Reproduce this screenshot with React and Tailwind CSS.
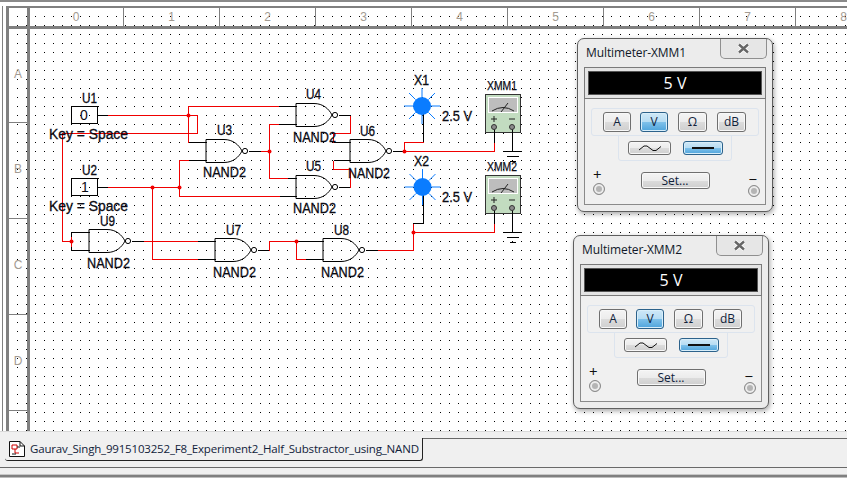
import React from "react";

const redPaths = [
  "M107 115H197V133H62V241H71",
  "M188 115V106H278",
  "M188 115V142",
  "M269 151H260M269 151V124H278M269 151V178H287",
  "M188 160H179V196H279",
  "M107 187H179",
  "M152 187V259H197",
  "M143 241H197",
  "M269 250V241H296M296 241V259H305",
  "M377 250H413V223",
  "M413 232H494V223",
  "M350 115V133H333V142",
  "M350 187V169H333V160",
  "M404 151H494V142",
  "M404 151V142H423",
  "M71 236V246",
];
const blackPaths = [
  "M98 115H107", "M98 187H107",
  "M188 142H206", "M188 160H206",
  "M248 151H260",
  "M278 106H296", "M278 124H296", "M287 178H296", "M279 196H296",
  "M338 115H350", "M338 187H350",
  "M333 142H350", "M333 160H350",
  "M392 151H404",
  "M423 142V106", "M413 223H423V187",
  "M71 236V232H89M71 246V250H89",
  "M131 241H143", "M197 241H215", "M197 259H215",
  "M257 250H269",
  "M296 241H323", "M305 259H323",
  "M365 250H377",
];
const junctions = [[188,115],[269,151],[179,187],[152,187],[71,241],[296,241],[404,151],[413,232]];
const gates = [[296,103],[206,139],[296,175],[350,139],[89,229],[215,238],[323,238]];
const labels = [
  ["U1",82,103,15],["U2",82,175,15],["U3",217,135,15],["U4",306,99,15],["U5",306,171,15],["U6",360,136,15],["U7",226,235,15],["U8",334,235,15],["U9",100,226,15],
  ["NAND2",203,177,43],["NAND2",293,142,43],["NAND2",293,213,43],["NAND2",348,178,42],["NAND2",87,268,43],["NAND2",213,277,43],["NAND2",321,277,43],
  ["Key = Space",49,139,79],["Key = Space",49,211,79],
  ["X1",414,85,15],["X2",414,166,15],["2.5 V",442,121,30],["2.5 V",442,202,30],
];

function Gate({ x, y }) {
  return (
    <g transform={`translate(${x} ${y})`} fill="none" stroke="#000">
      <path d="M0 0.5H18C27 0.5 33 6 36 12C33 18 27 23.5 18 23.5H0Z" />
      <circle cx="39" cy="12" r="2.6" fill="#fff" />
    </g>
  );
}

function Led({ cx, cy }) {
  const rays = [[0,-1],[0,1],[-1,0],[1,0],[-0.72,-0.72],[0.72,-0.72],[-0.72,0.72],[0.72,0.72]];
  return (
    <g>
      {rays.map(([a, b], i) => (
        <line key={i} x1={cx + a * 9} y1={cy + b * 9} x2={cx + a * 18} y2={cy + b * 18} stroke="#0a7cff" strokeWidth="1" />
      ))}
      <circle cx={cx} cy={cy} r="9" fill="#0a7cff" />
    </g>
  );
}

function Meter({ y, name }) {
  return (
    <g>
      <text x="487" y={y - 4} className="font-['Liberation_Sans'] text-[12px]" textLength="30" lengthAdjust="spacingAndGlyphs" fill="#0b0b14" stroke="#0b0b14" strokeWidth="0.25">{name}</text>
      <rect x="485.5" y={y + 0.5} width="35" height="38" fill="#c2dcc0" stroke="#333" />
      <rect x="488.5" y={y + 3.5} width="29" height="15" fill="#bdbdbd" stroke="#fff" />
      <path d={`M492 ${y + 17}Q503 ${y + 10} 514 ${y + 17}M501 ${y + 18}L508 ${y + 9}`} fill="none" stroke="#222" />
      <path d={`M491 ${y + 25}H497M494 ${y + 22}V${y + 28}M509 ${y + 25}H515`} stroke="#222" fill="none" />
      <path d={`M494.5 ${y + 35}V${y + 48}M512.5 ${y + 35}V${y + 57}`} stroke="#000" fill="none" />
      <circle cx="494" cy={y + 33} r="2.5" fill="#8c8c8c" stroke="#333" />
      <circle cx="512" cy={y + 33} r="2.5" fill="#8c8c8c" stroke="#333" />
      <path d={`M503 ${y + 57.5}H522M507 ${y + 62.5}H519M510 ${y + 67.5}H516`} stroke="#000" fill="none" />
    </g>
  );
}

function Schematic() {
  return (
    <svg width="838" height="423" viewBox="9 8 838 423" className="absolute left-0 top-0" aria-hidden="true">
      <defs>
        <pattern id="dots" x="17" y="16" width="9" height="9" patternUnits="userSpaceOnUse">
          <rect width="1" height="1" fill="#000" shapeRendering="crispEdges" />
        </pattern>
      </defs>
      <rect x="9" y="8" width="838" height="423" fill="url(#dots)" />
      <g transform="translate(0.5 0.5)">
        {blackPaths.map((d, i) => <path key={i} d={d} fill="none" stroke="#000" shapeRendering="crispEdges" />)}
        {redPaths.map((d, i) => <path key={i} d={d} fill="none" stroke="#f00000" shapeRendering="crispEdges" />)}
        {junctions.map(([x, y], i) => <circle key={i} cx={x} cy={y} r="2" fill="#f00000" />)}
      </g>
      {gates.map(([x, y], i) => <Gate key={i} x={x} y={y} />)}
      <rect x="71.5" y="106.5" width="26" height="17" fill="none" stroke="#000" />
      <rect x="71.5" y="178.5" width="26" height="17" fill="none" stroke="#000" />
      <text x="80" y="120" className="font-['Liberation_Sans'] text-[14px]" fill="#0b0b14">0</text>
      <text x="81" y="192" className="font-['Liberation_Sans'] text-[14px]" fill="#0b0b14">1</text>
      <Led cx={422} cy={106} />
      <Led cx={422.5} cy={187} />
      <Meter y={94} name="XMM1" />
      <Meter y={175} name="XMM2" />
      {labels.map(([t, x, y, w], i) => (
        <text key={i} x={x} y={y} textLength={w} lengthAdjust="spacingAndGlyphs" className="font-['Liberation_Sans'] text-[14px]" fill="#0b0b14" stroke="#0b0b14" strokeWidth="0.3">{t}</text>
      ))}
    </svg>
  );
}

const btnBase = "flex items-center justify-center rounded-[3px] border border-[#6f6f6f] text-[12px] text-[#10223a] shadow-[inset_0_0_0_1px_#f8f8f8] bg-[linear-gradient(#f4f4f4_0%,#ececec_50%,#dcdcdc_51%,#cfcfcf_100%)]";
const btnOn = "flex items-center justify-center rounded-[3px] border border-[#2c628b] text-[12px] text-[#10223a] shadow-[inset_0_0_0_1px_#d8eefa] bg-[linear-gradient(#cfe8f7_0%,#b5dcf3_50%,#7fc1ea_51%,#4ea4dc_100%)]";

function Multimeter({ name, pos }) {
  return (
    <div className={`absolute ${pos} flex h-[174px] w-[196px] flex-col rounded-[7px] border border-[#5f5f5f] bg-[#ececec] shadow-[1px_2px_5px_rgba(0,0,0,0.35)] font-['Open_Sans']`}>
      <div className="flex h-[28px] shrink-0 items-start justify-between">
        <span className="pl-[8px] pt-[5px] text-[12px] leading-[17px] tracking-[-0.1px] text-[#101828]">{name}</span>
        <div className="mr-[5px] flex h-[20px] w-[47px] items-center justify-center rounded-b-[5px] border border-t-0 border-[#8f8f8f] bg-[#e6e6e6]">
          <svg width="13" height="11" viewBox="0 0 13 11">
            <path d="M2 1.5L11 9.5M11 1.5L2 9.5" stroke="#fff" strokeWidth="4.2" />
            <path d="M2 1.5L11 9.5M11 1.5L2 9.5" stroke="#666" strokeWidth="2.4" />
          </svg>
        </div>
      </div>
      <div className="mx-[6px] flex h-[32px] shrink-0 items-center justify-center border border-[#7a7a7a] bg-[#e4e4e4] p-[3px]">
        <div className="flex h-full w-full items-center justify-center border border-[#555] bg-black text-[16px] leading-none text-white">5 V</div>
      </div>
      <div className="relative mx-[6px] mb-[6px] flex flex-1 flex-col items-center border border-t-0 border-[#8a8a8a] bg-[#f0f0f0] pt-[9px]">
        <div className="flex h-[28px] w-[168px] items-center rounded-[3px] border border-[#dce4ee] pl-[11px]">
          <div className={`${btnBase} h-[20px] w-[28px]`}>A</div>
          <div className={`${btnOn} ml-[9px] h-[20px] w-[28px]`}>V</div>
          <div className={`${btnBase} ml-[10px] h-[20px] w-[29px]`}>Ω</div>
          <div className={`${btnBase} ml-[10px] h-[20px] w-[29px]`}>dB</div>
        </div>
        <div className="-mt-px flex h-[26px] w-[114px] items-center rounded-b-[3px] border border-[#dce4ee] pl-[9px]">
          <div className={`${btnBase} h-[14px] w-[43px]`}>
            <svg width="24" height="8" viewBox="0 0 24 8"><path d="M1 6L6 2H9L15 6.5H18L23 2.5" fill="none" stroke="#111" /></svg>
          </div>
          <div className={`${btnOn} ml-[12px] h-[14px] w-[40px]`}>
            <div className="h-[2px] w-[22px] bg-[#111]" />
          </div>
        </div>
        <div className={`${btnBase} mt-[11px] h-[17px] w-[69px]`}>Set...</div>
        <span className="absolute left-[8px] top-[68px] text-[15px] leading-[15px] text-[#111]">+</span>
        <div className="absolute left-[8px] top-[84px] h-[12px] w-[12px] rounded-full border border-[#8a8a8a] bg-[#b4b4b4] shadow-[inset_0_0_0_2px_#ececec]" />
        <span className="absolute right-[8px] top-[73px] text-[15px] leading-[15px] text-[#111]">−</span>
        <div className="absolute right-[5px] top-[86px] h-[12px] w-[12px] rounded-full border border-[#8a8a8a] bg-[#b4b4b4] shadow-[inset_0_0_0_2px_#ececec]" />
      </div>
    </div>
  );
}

const cols = ["0","1","2","3","4","5","6","7","8"];
const rows = ["A","B","C","D"];

export default function App() {
  return (
    <div className="flex h-[478px] w-[847px] flex-col overflow-hidden bg-[#f0f0f0] font-['Liberation_Sans']">
      <div className="h-[2px] shrink-0 bg-[#8a8a8a]" />
      <div className="h-[429px] shrink-0 bg-white pl-[2px] pt-[4px]">
        <div className="h-full border-l border-[#808080] pl-[3px]">
          <div className="relative h-full border-l-[3px] border-t-[2px] border-[#808080] bg-white">
            <Schematic />
            <div className="relative grid h-full grid-cols-[21px_1fr] grid-rows-[21px_1fr]">
              <div className="border-b-[3px] border-r-[3px] border-[#808080]" />
              <div className="flex overflow-hidden border-b-[3px] border-[#808080]">
                {cols.map((c, i) => (
                  <div key={c} className={`flex shrink-0 items-center justify-center border-r border-[#808080] text-[12px] text-[#a39b92] ${i === 0 ? "w-[94px] pr-[1px]" : "w-[96px]"}`}>{c}</div>
                ))}
              </div>
              <div className="flex flex-col overflow-hidden border-r-[3px] border-[#808080]">
                {rows.map((r, i) => (
                  <div key={r} className={`flex shrink-0 items-center justify-center border-b border-[#808080] pb-[3px] text-[12px] text-[#a39b92] ${i === 0 ? "h-[94px]" : "h-[96px]"}`}>{r}</div>
                ))}
              </div>
              <div />
            </div>
            <Multimeter name="Multimeter-XMM1" pos="left-[568px] top-[30px]" />
            <Multimeter name="Multimeter-XMM2" pos="left-[564px] top-[227px]" />
          </div>
        </div>
      </div>
      <div className="flex h-[36px] shrink-0 border-t border-[#d9d9d9] pt-[6px]">
        <div className="ml-[5px] flex h-[23px] w-[418px] shrink-0 items-center rounded-b-[3px] border-b border-r border-[#222] pl-[4px] font-['Open_Sans'] text-[11.5px] tracking-[-0.18px] text-[#10223a]">
          <svg width="16" height="16" viewBox="0 0 16 16" className="mr-[5px] shrink-0">
            <path d="M0.5 0.5H11L15.5 5V15.5H0.5Z" fill="#fff" stroke="#111" />
            <path d="M11 0.5V5H15.5" fill="none" stroke="#111" />
            <path d="M3 4H8V8H3ZM6 8V12H10" fill="none" stroke="#d00000" />
            <path d="M8 6H11M3 13H7" fill="none" stroke="#111" />
          </svg>
          <span className="whitespace-nowrap">Gaurav_Singh_9915103252_F8_Experiment2_Half_Substractor_using_NAND</span>
        </div>
        <div className="flex-1 border-t border-[#696969]" />
      </div>
      <div className="h-[1px] shrink-0 bg-[#696969]" />
      <div className="mt-[6px] h-[1px] shrink-0 bg-[#c8c8c8]" />
      <div className="h-[2px] shrink-0 bg-[#808080]" />
      <div className="flex-1 bg-[#bdbdbd]" />
    </div>
  );
}
